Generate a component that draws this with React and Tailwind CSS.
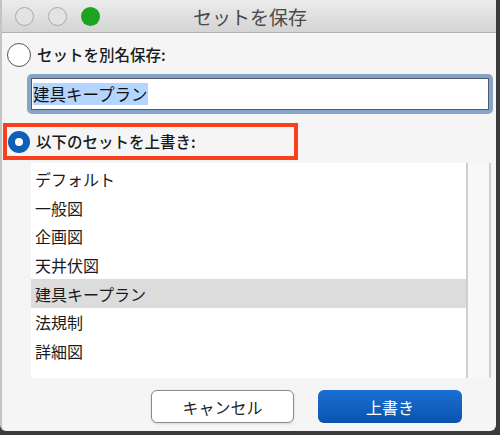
export default function App() {
  const items = ["デフォルト", "一般図", "企画図", "天井伏図", "建具キープラン", "法規制", "詳細図"]
  const selected = "建具キープラン"

  return (
    <div
      className="w-[500px] h-[435px] bg-[#3a3a3a] overflow-hidden"
      style={{ fontFamily: '"Noto Sans CJK JP", "Noto Sans", sans-serif' }}
    >
      <div className="w-[496px] h-[431px] bg-[#f5f5f5] rounded-b-[6px] flex flex-col border-l-2 border-[#c4c4c4]">
        {/* title bar */}
        <div className="h-[33px] flex items-center bg-gradient-to-b from-[#ececec] to-[#d4d4d4] border-b border-[#b1b1b1]">
          <div className="flex items-center gap-[14px] pl-[13px]">
            <span className="w-[19px] h-[19px] rounded-full border border-[#a9a9a9] bg-[#e3e3e3]" />
            <span className="w-[19px] h-[19px] rounded-full border border-[#a9a9a9] bg-[#e3e3e3]" />
            <span className="w-[19px] h-[19px] rounded-full bg-[#1ca421]" />
          </div>
          <div className="flex-1 text-center text-[19px] text-[#4a4a4a] pr-[96px] leading-none">セットを保存</div>
        </div>

        {/* save as new */}
        <div className="flex items-center gap-[6px] pl-[5px] mt-[10px] h-[24px]">
          <span className="w-[24px] h-[24px] rounded-full border-[1.5px] border-[#555] bg-white" />
          <span className="text-[15.5px] text-[#1a1a1a] font-medium">セットを別名保存:</span>
        </div>

        <div className="ml-[25px] mt-[7px] w-[466px] h-[40px] rounded-[5px] bg-[#86a3c8] p-[4px]">
          <div className="h-full bg-white border-[1.5px] border-[#4f5b6a] flex items-center pl-[1px]">
            <span className="bg-[#b4d5fe] text-[16.5px] text-[#111] leading-[22px]">建具キープラン</span>
          </div>
        </div>

        {/* overwrite */}
        <div className="ml-[1px] mt-[9px] w-[295px] h-[37px] border-[4px] border-[#f8401c] flex items-center gap-[6px] pl-[1px]">
          <span className="w-[22px] h-[22px] rounded-full bg-[#0f5fb8] flex items-center justify-center">
            <span className="w-[8px] h-[8px] rounded-full bg-white" />
          </span>
          <span className="text-[15.5px] text-[#1a1a1a] font-medium">以下のセットを上書き:</span>
        </div>

        {/* list */}
        <div className="mt-[3px] ml-[29px] flex h-[215px]">
          <div className="w-[435px] bg-white pt-[2px]">
            {items.map((item) => (
              <div
                key={item}
                className={`h-[28.6px] flex items-center pl-[4px] text-[16px] text-[#1a1a1a] ${
                  item === selected ? "bg-[#dcdcdc]" : ""
                }`}
              >
                {item}
              </div>
            ))}
          </div>
          <div className="w-[25px] bg-[#f8f8f8] border-l-2 border-r-2 border-[#cfcfcf]" />
        </div>

        {/* buttons */}
        <div className="flex justify-end gap-[24px] pr-[34px] mt-[12px]">
          <button className="w-[143px] h-[33px] rounded-[6px] bg-white border border-[#8a8a8a] text-[16px] text-[#1f1f1f] shadow-sm">
            キャンセル
          </button>
          <button className="w-[144px] h-[33px] rounded-[6px] bg-gradient-to-b from-[#1a6fd2] to-[#0b53ae] text-[16px] text-white">
            上書き
          </button>
        </div>
      </div>
    </div>
  )
}
